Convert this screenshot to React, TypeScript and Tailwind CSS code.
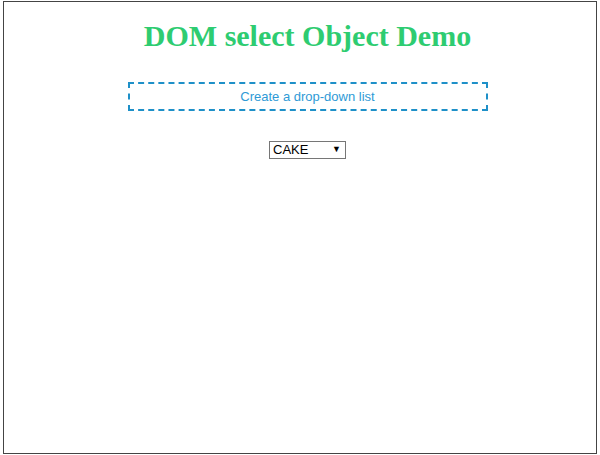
export default function App() {
  return (
    <div className="w-[600px] h-[455px] bg-white pt-[1px] pl-[3px]">
      <div className="w-[594px] h-[453px] border border-[#444] bg-white flex flex-col items-center pl-[15px]">
        <h1
          className="mt-[15px] text-[30px] leading-[37px] font-bold text-[#2ecc71]"
          style={{ fontFamily: '"Liberation Serif", "Times New Roman", serif' }}
        >
          DOM select Object Demo
        </h1>
        <button
          className="mt-[28px] w-[360px] h-[29px] border-2 border-dashed border-[#1e90c8] text-[13px] text-[#2e9ad6] bg-white"
          style={{ fontFamily: '"Liberation Sans", Arial, sans-serif' }}
        >
          Create a drop-down list
        </button>
        <div
          className="mt-[30px] w-[77px] h-[18px] border border-[#767676] bg-white flex items-center justify-between pl-[3px] pr-[4px] text-[13px] text-black"
          style={{ fontFamily: '"Liberation Sans", Arial, sans-serif' }}
        >
          <span>CAKE</span>
          <span className="text-[9px]">▼</span>
        </div>
      </div>
    </div>
  );
}
